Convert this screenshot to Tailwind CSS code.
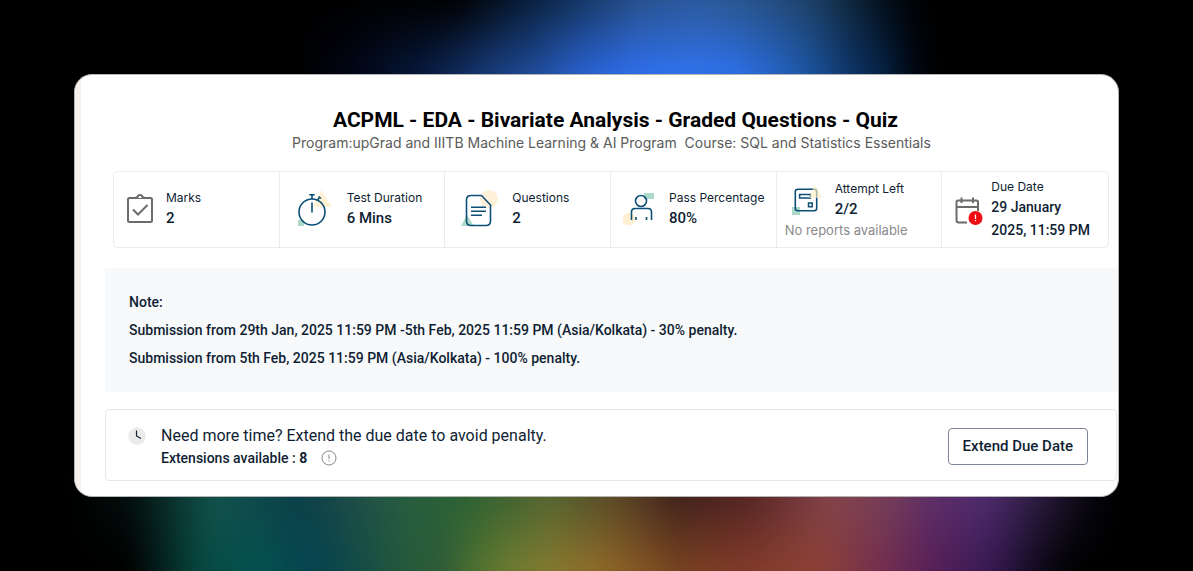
<!DOCTYPE html>
<html lang="en">
<head>
<meta charset="utf-8">
<meta name="viewport" content="width=device-width, initial-scale=1">
<title>ACPML - EDA - Bivariate Analysis - Graded Questions - Quiz</title>
<script src="https://cdn.jsdelivr.net/npm/@tailwindcss/browser@4"></script>
</head>
<body class="relative isolate flex min-h-screen items-center overflow-x-hidden bg-black px-[74px] font-['Roboto',sans-serif] text-[#0f1e33]">
<div class="absolute inset-0 -z-10 overflow-hidden" aria-hidden="true">
  <!-- blue glow above the card: upper row of colour, fading into the lower row -->
  <div class="absolute inset-x-0 -top-5 h-[120px] blur-[10px]">
    <div class="absolute inset-0 bg-[linear-gradient(to_right,#000_38.3%,#05101f_41.5%,#0a2343_45.3%,#153663_48.6%,#28518d_53.4%,#2d5a9f_58.2%,#2a5890_61.4%,#254e82_64.6%,#1e4068_67.8%,#102a40_71%,#030d18_74.3%,#000_77.5%)]"></div>
    <div class="absolute inset-0 mask-[linear-gradient(to_bottom,transparent_20px,#000_92px)] bg-[linear-gradient(to_right,#000_25%,#010414_29.3%,#071a3f_35.8%,#15366f_40.2%,#214f9e_45.3%,#285fcb_48.6%,#2e6de8_53%,#2f72ec_56.6%,#2d6fe8_61.4%,#2765c8_64.6%,#1b559f_67.8%,#10366c_71%,#05203f_74.3%,#010714_76.5%,#000_78.4%)]"></div>
  </div>
  <!-- rainbow glow below the card -->
  <div class="absolute inset-x-0 -bottom-5 h-[120px] blur-[10px]">
    <div class="absolute inset-0 bg-[linear-gradient(to_right,#000_6%,#04100e_10.9%,#13544d_17.9%,#0b3f49_25%,#1a4a48_28.5%,#275e40_33.9%,#2c6233_39.1%,#566630_46.2%,#5a4526_52.1%,#40221c_56.7%,#552524_62.6%,#84444c_69.7%,#753e58_74.4%,#5f2f68_78%,#4f2c6e_82.6%,#2a1c3e_87.3%,#08060f_91.4%,#000_93.8%)]"></div>
    <div class="absolute inset-0 mask-[linear-gradient(to_bottom,transparent_24px,#000_100px)] bg-[linear-gradient(to_right,#000_10.9%,#064840_16.8%,#045250_21.5%,#05424f_26.8%,#275a3a_34.5%,#2c5a38_36.8%,#55742f_40.3%,#6d7c30_42.7%,#857a30_46.2%,#906a28_50.3%,#784420_56.7%,#803a28_61.4%,#8e4134_68.6%,#702c50_74.4%,#551f58_78.5%,#351850_83.2%,#0d0818_87.3%,#000_89.7%)]"></div>
  </div>
</div>

<main class="w-full overflow-hidden rounded-[18px] border border-[#b5b5b5] bg-white">
  <div class="border-l-6 border-[#f5f0e9] pt-[31px] pb-[15px] pl-6">
    <header class="pl-2 text-center">
      <h1 class="text-[21px] leading-7 font-bold text-black">ACPML - EDA - Bivariate Analysis - Graded Questions - Quiz</h1>
      <p class="pr-2 font-['Inter',sans-serif] text-sm leading-[18px] text-[#5a5a5a]">Program:upGrad and IIITB Machine Learning &amp; AI Program&nbsp; Course: SQL and Statistics Essentials</p>
    </header>

    <dl class="mt-[19px] mr-[9px] ml-2 grid min-h-[77px] grid-cols-6 divide-x divide-[#ececec] rounded border border-[#ececec]">
      <div class="flex items-center pb-1 pl-3">
        <svg class="mr-3 h-[30px] w-7 shrink-0" viewBox="0 0 28 30" fill="none" stroke="#6b6b6b" stroke-width="2" aria-hidden="true"><rect x="2" y="5" width="24" height="24" rx="1.5"/><path d="M10 5C10 4 11 4 11.500 4C12 1.300 16 1.300 16.500 4C17 4 18 4 18 5" fill="white"/><path d="M7 16.500L12 21.500L21.500 12"/></svg>
        <div><dt class="font-['Inter',sans-serif] text-xs leading-5">Marks</dt><dd class="text-[15px] leading-5 font-medium">2</dd></div>
      </div>
      <div class="flex items-center pb-1 pl-4">
        <svg class="mr-[13px] h-10 w-[38px] shrink-0" viewBox="0 0 38 40" fill="none" aria-hidden="true"><path d="M25 2L36 19H17Z" fill="#fff1d2"/><path d="M2 32h6v6H2z" fill="#add9c8"/><g stroke="#0b4f78" stroke-width="1.600"><circle cx="16" cy="24" r="13"/><path d="M13.300 6.700H18.700M16 7v4M16 14.500V24.500M21.500 12L24 9M22.600 8.500L25 10.500"/></g></svg>
        <div><dt class="font-['Inter',sans-serif] text-xs leading-5">Test Duration</dt><dd class="text-[15px] leading-5 font-medium">6 Mins</dd></div>
      </div>
      <div class="flex items-center pb-1 pl-4">
        <svg class="mr-[13px] h-10 w-[38px] shrink-0" viewBox="0 0 38 40" fill="none" aria-hidden="true"><circle cx="28" cy="11" r="9" fill="#fff1d9"/><path d="M0 38L6 27L13 38Z" fill="#add9c8"/><g stroke="#0b4f78" stroke-width="1.600"><path d="M10 7.500H20.500L29.500 17V33Q29.500 37.500 25 37.500H10Q5.500 37.500 5.500 33V12Q5.500 7.500 10 7.500Z"/><path d="M10 19.300H25M10 23.300H25M10 27.300H21"/></g></svg>
        <div><dt class="font-['Inter',sans-serif] text-xs leading-5">Questions</dt><dd class="text-[15px] leading-5 font-medium">2</dd></div>
      </div>
      <div class="flex items-center pb-1 pl-3">
        <svg class="mr-[14px] h-9 w-8 shrink-0" viewBox="0 0 32 36" fill="none" aria-hidden="true"><path d="M21 3h10v6H21z" fill="#add9c8"/><circle cx="6" cy="29" r="6.500" fill="#fff1d2"/><g stroke="#0b4f78" stroke-width="1.600"><circle cx="18" cy="11" r="5.500"/><path d="M8.500 30V22Q8.500 18.500 12 18.500H25Q28.500 18.500 28.500 22V30M13 27v3M23.500 27v3"/></g></svg>
        <div><dt class="font-['Inter',sans-serif] text-xs leading-5 whitespace-nowrap">Pass Percentage</dt><dd class="text-[15px] leading-5 font-medium">80%</dd></div>
      </div>
      <div class="flex flex-col justify-center pt-0.5 pl-2">
        <div class="flex items-center pl-[7px]">
          <svg class="mr-[13px] h-[34px] w-[30px] shrink-0" viewBox="0 0 30 34" fill="none" aria-hidden="true"><rect x="0" y="25" width="8" height="8" fill="#add9c8"/><g stroke="#0b4f78"><rect x="3.300" y="7.300" width="21.400" height="21.400" rx="2.500" stroke-width="1.600"/><path d="M7.600 12.600h10.800v3.300H7.600zM16.500 21h3.700v3.700h-3.700z" stroke-width="1.500"/></g><path d="M23 2L30 16H17Z" fill="#fff1c7" fill-opacity=".65"/></svg>
          <div><dt class="font-['Inter',sans-serif] text-xs leading-5">Attempt Left</dt><dd class="text-[15px] leading-5 font-medium">2/2</dd></div>
        </div>
        <dd class="font-['Inter',sans-serif] text-[13px] leading-[23px] text-[#8a8a8a]">No reports available</dd>
      </div>
      <div class="flex items-center pl-[13px]">
        <svg class="mr-2 h-[30px] w-7 shrink-0" viewBox="0 0 28 30" fill="none" aria-hidden="true"><path d="M23 16V7Q23 5.500 21.500 5.500H3Q1.500 5.500 1.500 7V25Q1.500 27.500 4 27.500H12M1 12H23M6.500 2.500V8M18 2.500V8" stroke="#6b6b6b" stroke-width="2"/><circle cx="20.500" cy="23" r="7" fill="#ef0c12"/><path d="M20.500 19.500V24M20.500 25v1.300" stroke="#fff" stroke-width="1.200"/></svg>
        <div><dt class="font-['Inter',sans-serif] text-xs leading-[18px]">Due Date</dt><dd class="text-sm leading-[23px] font-medium">29 January<br>2025, 11:59 PM</dd></div>
      </div>
    </dl>

    <section class="mt-5 bg-[#f7f9fb] px-6 py-5 text-sm leading-7 font-medium" aria-label="Late submission note">
      <p>Note:</p>
      <p>Submission from 29th Jan, 2025 11:59 PM -5th Feb, 2025 11:59 PM (Asia/Kolkata) - 30% penalty.</p>
      <p>Submission from 5th Feb, 2025 11:59 PM (Asia/Kolkata) - 100% penalty.</p>
    </section>

    <section class="mt-[17px] mr-px flex items-center rounded border border-[#e6e6e6] pt-[14px] pr-7 pb-3 pl-[22px]" aria-label="Extend due date">
      <svg class="mt-[3px] mr-[15px] h-[18px] w-[18px] shrink-0 self-start" viewBox="0 0 18 18" fill="none" aria-hidden="true"><circle cx="9" cy="9" r="8.700" fill="#ebebeb"/><path d="M8.500 3.500V9L13 11.500" stroke="#0f1e33" stroke-width="1.200"/></svg>
      <div class="grow">
        <p class="text-base leading-6">Need more time? Extend the due date to avoid penalty.</p>
        <p class="flex items-center text-sm leading-5 font-medium">Extensions available :&nbsp;<b class="text-sm leading-5">8</b>
          <svg class="ml-[14px] h-4 w-4" viewBox="0 0 16 16" fill="none" stroke="#85888f" role="img" aria-label="Extension details"><circle cx="8" cy="8" r="7"/><path d="M8 4.500V9M8 10.300v1.200"/></svg></p>
      </div>
      <button type="button" class="h-[37px] rounded border border-[#7c8595] px-[14px] text-[15px] font-medium">Extend Due Date</button>
    </section>
  </div>
</main>
</body>
</html>
